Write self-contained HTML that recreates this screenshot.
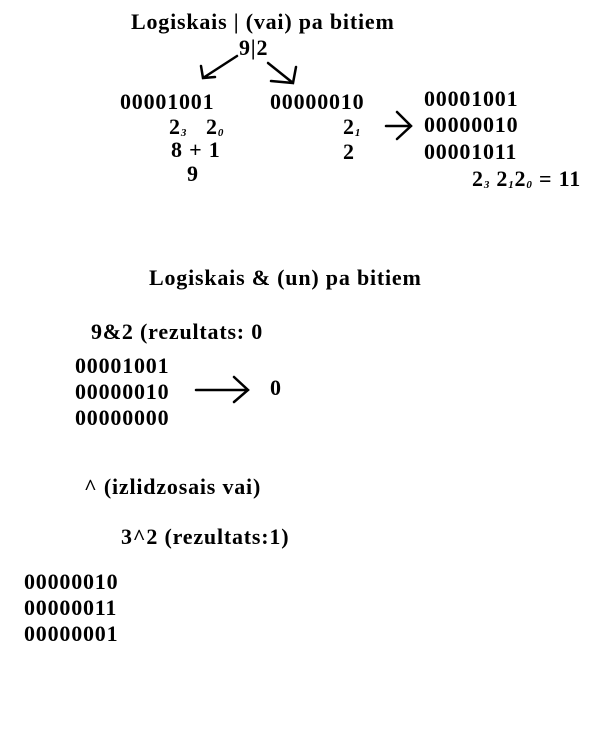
<!DOCTYPE html>
<html><head><style>
body{margin:0;width:595px;height:737px;background:#fff;position:relative;overflow:hidden;font-family:"Liberation Serif",serif;font-weight:bold;color:#000}
.t{position:absolute;font-size:22px;line-height:1;white-space:nowrap;letter-spacing:0.8px}
sub{font-size:11px;font-style:italic;vertical-align:-2px}
svg{position:absolute;left:0;top:0}
</style></head><body>
<div class="t" style="left:131px;top:11px">Logiskais | (vai) pa bitiem</div>
<div class="t" style="left:239px;top:37px">9|2</div>
<div class="t" style="left:120px;top:91px">00001001</div>
<div class="t" style="left:270px;top:91px">00000010</div>
<div class="t" style="left:169px;top:116px">2<sub>3</sub> &nbsp; 2<sub>0</sub></div>
<div class="t" style="left:171px;top:139px">8 + 1</div>
<div class="t" style="left:187px;top:163px">9</div>
<div class="t" style="left:343px;top:116px">2<sub>1</sub></div>
<div class="t" style="left:343px;top:141px">2</div>
<div class="t" style="left:424px;top:88px">00001001</div>
<div class="t" style="left:424px;top:114px">00000010</div>
<div class="t" style="left:424px;top:141px">00001011</div>
<div class="t" style="left:472px;top:168px">2<sub>3</sub> 2<sub>1</sub>2<sub>0</sub> = 11</div>
<div class="t" style="left:149px;top:267px">Logiskais &amp; (un) pa bitiem</div>
<div class="t" style="left:91px;top:321px">9&amp;2 (rezultats: 0</div>
<div class="t" style="left:75px;top:355px">00001001</div>
<div class="t" style="left:75px;top:381px">00000010</div>
<div class="t" style="left:75px;top:407px">00000000</div>
<div class="t" style="left:270px;top:377px">0</div>
<div class="t" style="left:84px;top:476px">^ (izlidzosais vai)</div>
<div class="t" style="left:121px;top:526px">3^2 (rezultats:1)</div>
<div class="t" style="left:24px;top:571px">00000010</div>
<div class="t" style="left:24px;top:597px">00000011</div>
<div class="t" style="left:24px;top:623px">00000001</div>
<svg width="595" height="737" fill="none" stroke="#000" stroke-width="2.5" stroke-linecap="round">
<path d="M237 56 L203 78 M201 66 L203 78 L215 77"/>
<path d="M268 63 L293 83 M271 81 L293 83 L296 67"/>
<path d="M386 126 L411 126 M397 112 L411 126 L397 139"/>
<path d="M196 390 L248 390 M234 377 L248 390 L234 402"/>
</svg>
</body></html>
